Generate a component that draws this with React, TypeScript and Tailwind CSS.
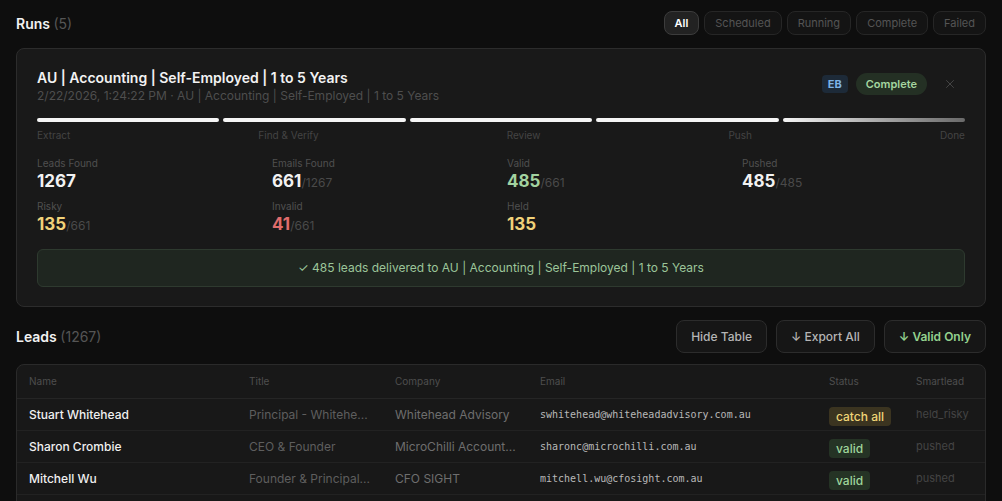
import { X } from 'lucide-react';

const FILTERS = ['All', 'Scheduled', 'Running', 'Complete', 'Failed'];

const STAGES = ['Extract', 'Find & Verify', 'Review', 'Push', 'Done'];

const STATS = [
  { label: 'Leads Found', value: '1267', total: '', color: 'text-[#f2f2f2]' },
  { label: 'Emails Found', value: '661', total: '/1267', color: 'text-[#f2f2f2]' },
  { label: 'Valid', value: '485', total: '/661', color: 'text-[#a3d3a0]' },
  { label: 'Pushed', value: '485', total: '/485', color: 'text-[#f2f2f2]' },
  { label: 'Risky', value: '135', total: '/661', color: 'text-[#f1d27a]' },
  { label: 'Invalid', value: '41', total: '/661', color: 'text-[#e06c6c]' },
  { label: 'Held', value: '135', total: '', color: 'text-[#f1d27a]' },
];

const LEADS = [
  {
    name: 'Stuart Whitehead',
    title: 'Principal - Whitehe...',
    company: 'Whitehead Advisory',
    email: 'swhitehead@whiteheadadvisory.com.au',
    status: 'catch all',
    smartlead: 'held_risky',
  },
  {
    name: 'Sharon Crombie',
    title: 'CEO & Founder',
    company: 'MicroChilli Account...',
    email: 'sharonc@microchilli.com.au',
    status: 'valid',
    smartlead: 'pushed',
  },
  {
    name: 'Mitchell Wu',
    title: 'Founder & Principal...',
    company: 'CFO SIGHT',
    email: 'mitchell.wu@cfosight.com.au',
    status: 'valid',
    smartlead: 'pushed',
  },
];

const COLS = 'grid grid-cols-[220px_146px_145px_289px_87px_1fr] items-center pl-3';

function StatusBadge({ status }: { status: string }) {
  const style =
    status === 'valid'
      ? 'bg-[#253325] text-[#9fd59b]'
      : 'bg-[#3b3420] text-[#f0d678]';
  return (
    <span className={`inline-flex h-[19px] items-center rounded px-[7px] text-[12px] font-medium ${style}`}>
      {status}
    </span>
  );
}

export default function App() {
  return (
    <div
      className="h-[501px] w-full overflow-hidden bg-[#0e0e0e] px-4 text-[#eee]"
      style={{ fontFamily: 'Inter, "Noto Sans", sans-serif' }}
    >
      {/* Runs header */}
      <div className="flex h-[24px] items-center justify-between mt-[11px]">
        <h2 className="text-[14px] font-semibold text-[#f2f2f2]">
          Runs <span className="font-normal text-[#555]">(5)</span>
        </h2>
        <div className="flex gap-[5px]">
          {FILTERS.map((f) => (
            <button
              key={f}
              className={
                f === 'All'
                  ? 'h-[24px] rounded-lg border border-[#3c3c3c] bg-[#222] px-[10px] text-[11px] font-semibold text-white'
                  : 'h-[24px] rounded-lg border border-[#262626] bg-[#141414] px-[10px] text-[11px] text-[#555]'
              }
            >
              {f}
            </button>
          ))}
        </div>
      </div>

      {/* Run card */}
      <div className="mt-[13px] rounded-lg border border-[#2c2c2c] bg-[#191919] px-5 pt-5 pb-[19px]">
        <div className="flex items-start justify-between">
          <div>
            <div className="text-[14px] leading-[18px] font-semibold text-[#f2f2f2]">
              AU | Accounting | Self-Employed | 1 to 5 Years
            </div>
            <div className="text-[12px] leading-[18px] text-[#4e4e4e]">
              2/22/2026, 1:24:22 PM · AU | Accounting | Self-Employed | 1 to 5 Years
            </div>
          </div>
          <div className="mt-[4px] mr-[8px] flex items-center">
            <span className="flex h-[18px] items-center rounded bg-[#1d2a38] px-[6px] text-[11px] font-bold text-[#7eb3e6]">
              EB
            </span>
            <span className="ml-[8px] flex h-[22px] items-center rounded-full bg-[#243024] px-[10px] text-[11px] font-semibold text-[#a5d6a0]">
              Complete
            </span>
            <X className="ml-[16px] h-[14px] w-[14px] text-[#4a4a4a]" strokeWidth={1.5} />
          </div>
        </div>

        {/* Progress */}
        <div className="mt-[13px] flex gap-[4px]">
          {STAGES.map((s, i) => (
            <div
              key={s}
              className={
                i === STAGES.length - 1
                  ? 'h-[4px] flex-1 rounded-full bg-gradient-to-r from-[#f5f5f5] to-[#6a6a6a]'
                  : 'h-[4px] flex-1 rounded-full bg-[#f5f5f5]'
              }
            />
          ))}
        </div>
        <div className="mt-[7px] flex justify-between text-[10px] leading-[12px] text-[#444]">
          {STAGES.map((s) => (
            <span key={s}>{s}</span>
          ))}
        </div>

        {/* Stats */}
        <div className="mt-[15px] grid grid-cols-4 gap-x-3 gap-y-[5px]">
          {STATS.map((s) => (
            <div key={s.label}>
              <div className="text-[10px] leading-[14px] text-[#505050]">{s.label}</div>
              <div className="leading-[22px]">
                <span className={`text-[17px] font-bold ${s.color}`}>{s.value}</span>
                {s.total && <span className="text-[12px] text-[#4a4a4a]">{s.total}</span>}
              </div>
            </div>
          ))}
        </div>

        <div className="mt-[12px] flex h-[38px] items-center justify-center rounded-md border border-[#2e3a2f] bg-[#1f2620] text-[12px] text-[#9cc59a]">
          ✓ 485 leads delivered to AU | Accounting | Self-Employed | 1 to 5 Years
        </div>
      </div>

      {/* Leads header */}
      <div className="mt-[13px] flex h-[33px] items-center justify-between">
        <h2 className="text-[14px] font-semibold text-[#f2f2f2]">
          Leads <span className="font-normal text-[#555]">(1267)</span>
        </h2>
        <div className="flex gap-[9px]">
          <button className="h-[33px] rounded-lg border border-[#2c2c2c] bg-[#161616] px-[14px] text-[12px] font-medium text-[#b5b5b5]">
            Hide Table
          </button>
          <button className="h-[33px] rounded-lg border border-[#2c2c2c] bg-[#161616] px-[14px] text-[12px] font-medium text-[#b5b5b5]">
            ↓ Export All
          </button>
          <button className="h-[33px] rounded-lg border border-[#2c2c2c] bg-[#161616] px-[14px] text-[12px] font-semibold text-[#93d18e]">
            ↓ Valid Only
          </button>
        </div>
      </div>

      {/* Table */}
      <div className="mt-[11px] rounded-lg border border-[#2a2a2a] bg-[#181818]">
        <div className={`${COLS} h-[34px] border-b border-[#252525] text-[10px] text-[#4e4e4e]`}>
          <span>Name</span>
          <span>Title</span>
          <span>Company</span>
          <span>Email</span>
          <span>Status</span>
          <span>Smartlead</span>
        </div>
        {LEADS.map((l) => (
          <div key={l.email} className={`${COLS} h-[32px] border-b border-[#222]`}>
            <span className="text-[12px] font-medium text-[#f0f0f0]">{l.name}</span>
            <span className="text-[12px] text-[#5e5e5e]">{l.title}</span>
            <span className="text-[12px] text-[#6e6e6e]">{l.company}</span>
            <span
              className="text-[10px] text-[#b8b8b8]"
              style={{ fontFamily: '"DejaVu Sans Mono", monospace' }}
            >
              {l.email}
            </span>
            <span>
              <StatusBadge status={l.status} />
            </span>
            <span className="text-[11px] text-[#444]">{l.smartlead}</span>
          </div>
        ))}
        <div className="h-[32px]" />
      </div>
    </div>
  );
}
